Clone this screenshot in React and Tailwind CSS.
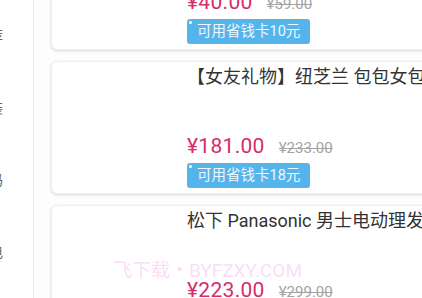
import React from 'react';

const FONT = "font-['Roboto','Noto_Sans_CJK_SC',sans-serif]";

const products = [
  { title: '【限时特惠】小米米家 电动牙刷 T300', price: '40.00', old: '59.00', card: '10' },
  { title: '【女友礼物】纽芝兰 包包女包2019新款斜挎包', price: '181.00', old: '233.00', card: '18' },
  { title: '松下 Panasonic 男士电动理发器 ER-GP80', price: '223.00', old: '299.00', card: '20' },
];

const categories = ['推荐', '女装', '数码', '家电'];

function ProductCard({ item }) {
  return (
    <div className="flex w-[430px] h-[133px] shrink-0 bg-white rounded-md border border-[#f0f0f0] shadow-[0_1px_3px_rgba(0,0,0,0.16)]">
      {/* image slot, not loaded */}
      <div className="w-[135px] shrink-0" />
      <div className="flex flex-col flex-1 pt-[4px] pb-[5px]">
        <div className="text-[18px] leading-[22px] text-[#333] whitespace-nowrap">{item.title}</div>
        <div className="flex-1" />
        <div className="flex items-baseline gap-[14px] h-[24px]">
          <span className="text-[21px] leading-[24px] text-[#d62c68] tracking-[0.3px]">¥{item.price}</span>
          <span className="text-[15px] text-[#a3a3a3] line-through">¥{item.old}</span>
        </div>
        <div className="mt-[5px]">
          <span className="relative inline-flex items-center h-[25px] px-[10px] rounded-[3px] bg-[#55b5ea] text-[14.5px] text-white/90">
            <span className="absolute left-[2px] top-[2px] w-[3px] h-[3px] rounded-full bg-white" />
            可用省钱卡{item.card}元
          </span>
        </div>
      </div>
    </div>
  );
}

export default function App() {
  return (
    <div className={`relative flex w-[422px] h-[298px] overflow-hidden bg-[#fdfdfd] ${FONT}`}>
      {/* category sidebar, scrolled sideways off screen */}
      <div className="w-[34px] shrink-0 border-r border-[#ececec] bg-white">
        {categories.map((c) => (
          <div key={c} className="h-[72px] flex items-center justify-end -ml-[60px] w-[63px] text-[14px] text-[#666]">
            {c}
          </div>
        ))}
      </div>

      {/* product list, scrolled down */}
      <div className="flex flex-col gap-[11px] pl-[17px] -mt-[83px]">
        {products.map((p) => (
          <ProductCard key={p.title} item={p} />
        ))}
      </div>

      <div className="absolute left-[113px] top-[259px] text-[19px] leading-[24px] text-[#f0a8ec]/40 whitespace-nowrap pointer-events-none">
        飞下载・BYFZXY.COM
      </div>
    </div>
  );
}
